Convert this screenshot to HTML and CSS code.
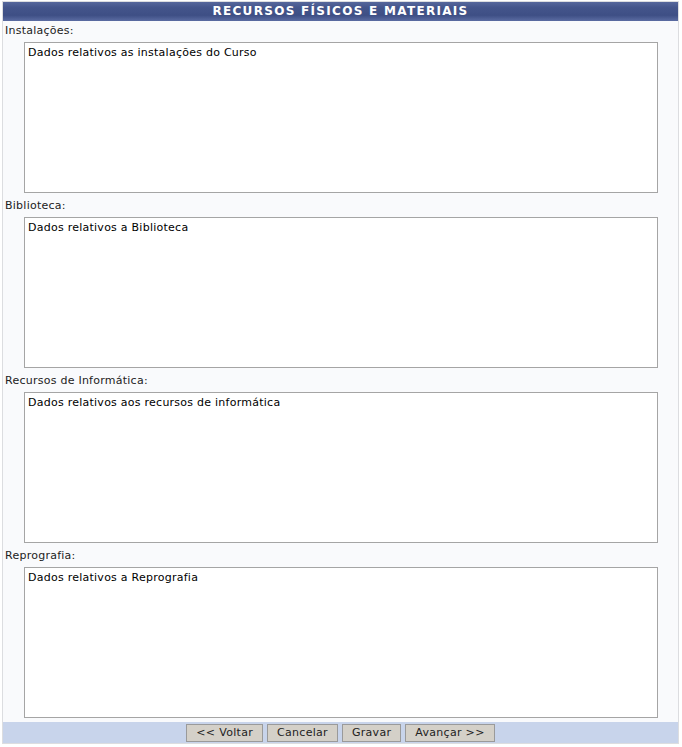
FILE: index.html
```html
<!DOCTYPE html>
<html lang="pt">
<head>
<meta charset="utf-8">
<title>Recursos Físicos e Materiais</title>
<link rel="stylesheet" href="styles.css">
</head>
<body>
<form class="form-table">
  <div class="caption">RECURSOS FÍSICOS E MATERIAIS</div>
  <div class="section">
    <div class="label">Instalações:</div>
    <div class="field"><textarea class="area">Dados relativos as instalações do Curso</textarea></div>
  </div>
  <div class="section">
    <div class="label">Biblioteca:</div>
    <div class="field"><textarea class="area">Dados relativos a Biblioteca</textarea></div>
  </div>
  <div class="section">
    <div class="label">Recursos de Informática:</div>
    <div class="field"><textarea class="area">Dados relativos aos recursos de informática</textarea></div>
  </div>
  <div class="section">
    <div class="label">Reprografia:</div>
    <div class="field"><textarea class="area">Dados relativos a Reprografia</textarea></div>
  </div>
  <div class="footer">
    <button type="button" class="btn">&lt;&lt; Voltar</button>
    <button type="button" class="btn">Cancelar</button>
    <button type="button" class="btn">Gravar</button>
    <button type="button" class="btn">Avançar &gt;&gt;</button>
  </div>
</form>
</body>
</html>
```
FILE: styles.css
```css
html, body {
  margin: 0;
  padding: 0;
  background: #ffffff;
}
body {
  padding: 1px 2px;
  font-family: "DejaVu Sans", Verdana, sans-serif;
  font-size: 11px;
  letter-spacing: 0.25px;
  color: #222;
}
.form-table {
  width: 677px;
  box-sizing: border-box;
  border: 1px solid #dcdde0;
  background: #f9fafc;
  margin: 0;
}
.caption {
  height: 19px;
  line-height: 19px;
  text-align: center;
  color: #ffffff;
  font-weight: bold;
  font-size: 12px;
  letter-spacing: 1.3px;
  background: linear-gradient(#56679c 0%, #44558b 30%, #3e4f85 70%, #5b6ca2 100%);
}
.label {
  height: 18px;
  line-height: 18px;
  padding-left: 2px;
  padding-top: 1px;
  box-sizing: border-box;
}
.field {
  padding: 3px 0 3px 21px;
}
.area {
  display: block;
  width: 634px;
  height: 151px;
  box-sizing: border-box;
  margin: 0;
  border: 1px solid #a5a5a5;
  background: #ffffff;
  padding: 3px 3px;
  font-family: "DejaVu Sans", Verdana, sans-serif;
  font-size: 11px;
  letter-spacing: 0.25px;
  color: #000;
  resize: none;
  line-height: 14px;
}
.footer {
  background: #c8d4eb;
  height: 21px;
  display: flex;
  justify-content: center;
  align-items: center;
  gap: 4px;
  margin-top: 1px;
}
.btn {
  height: 18px;
  margin: 0;
  padding: 0 9px;
  background: #d4d0c8;
  border: 1px solid #9a9a9a;
  font-family: "DejaVu Sans", Verdana, sans-serif;
  font-size: 11px;
  letter-spacing: 0.3px;
  color: #222;
  line-height: 16px;
}
```
